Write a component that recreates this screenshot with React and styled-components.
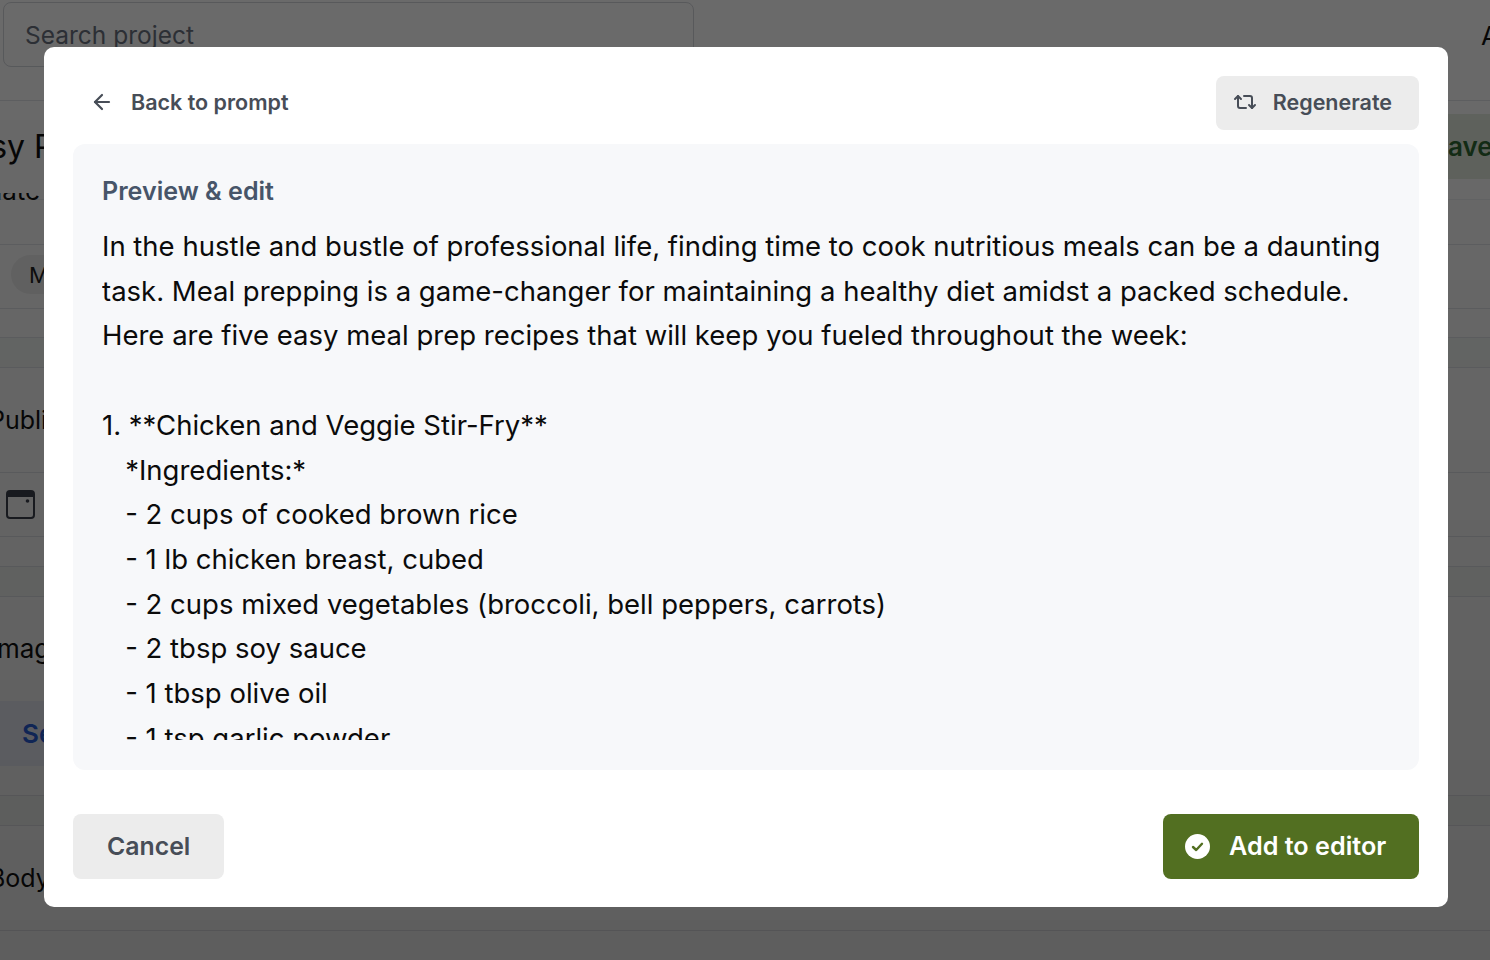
import styled, { createGlobalStyle } from 'styled-components';
import { ArrowLeft, Repeat2 } from 'lucide-react';

const GlobalStyle = createGlobalStyle`
  * {
    box-sizing: border-box;
  }
  html,
  body {
    margin: 0;
    height: 960px;
    overflow: hidden;
    background: #fff;
    font-family: Inter, 'Liberation Sans', sans-serif;
  }
`;

const Page = styled.div`
  width: 1490px;
  height: 960px;
  overflow: hidden;
`;

const Row = styled.div`
  height: ${(p) => p.$height}px;
  display: flex;
  align-items: ${(p) => p.$align || 'center'};
  justify-content: space-between;
  overflow: hidden;
  border-bottom: 1px solid #e3e5ea;
  background: ${(p) => (p.$tint ? '#f6f9f8' : '#fff')};
`;

const SearchBox = styled.div`
  width: 691px;
  height: 65px;
  margin: 2px 0 0 3px;
  padding: 0 21px;
  display: flex;
  align-items: center;
  border: 1px solid #d4d7dc;
  border-radius: 8px;
  font-size: 24.5px;
  color: #6b7280;
`;

const Avatar = styled.span`
  width: 30px;
  margin: 20px -21px 0 0;
  font-size: 26px;
  color: #111;
`;

const Clipped = styled.span`
  margin-left: ${(p) => p.$left}px;
  font-size: ${(p) => p.$size}px;
  color: #111;
  white-space: nowrap;
`;

const TitleRow = styled.div`
  height: 99px;
  display: flex;
  flex-direction: column;
  border-bottom: 1px solid #eef0f2;
`;

const TitleLine = styled.div`
  height: 92px;
  flex: none;
  display: flex;
  align-items: center;
  justify-content: space-between;
  padding-bottom: 1px;
  overflow: hidden;
`;

const SaveButton = styled.div`
  width: 120px;
  height: 65px;
  margin-right: -40px;
  display: flex;
  align-items: center;
  padding-left: 21px;
  background: #e6eee1;
  font-size: 26px;
  font-weight: 600;
  color: #2f6b34;
`;

const SubtitleStrip = styled.div`
  height: 9px;
  flex: none;
  overflow: hidden;
`;

const Subtitle = styled.div`
  margin: -18px 0 0 -49px;
  font-size: 26px;
  line-height: 32px;
  color: #111;
`;

const Chip = styled.div`
  width: 90px;
  height: 39px;
  margin: 0 0 4px 11px;
  padding-left: 18px;
  display: flex;
  align-items: center;
  border-radius: 20px;
  background: #f0f0f0;
  font-size: 22px;
  color: #222;
`;

const ImageCol = styled.div`
  display: flex;
  flex-direction: column;
  margin-top: 36px;
`;

const SelectButton = styled.div`
  width: 200px;
  height: 65px;
  margin: 37px 0 0 -12px;
  padding-left: 34px;
  display: flex;
  align-items: center;
  background: #eef2fb;
  font-size: 26px;
  font-weight: 600;
  color: #2b62e0;
`;

const CalendarSvg = styled.svg`
  margin-left: 6px;
`;

const Overlay = styled.div`
  position: fixed;
  inset: 0;
  background: linear-gradient(180deg, rgba(0, 0, 0, 0.585), rgba(0, 0, 0, 0.63));
`;

const Modal = styled.div`
  position: fixed;
  left: 44px;
  top: 47px;
  width: 1404px;
  height: 860px;
  padding: 29px 29px 28px;
  display: flex;
  flex-direction: column;
  background: #fff;
  border-radius: 10px;
`;

const ModalHeader = styled.div`
  height: 54px;
  flex: none;
  display: flex;
  align-items: center;
  justify-content: space-between;
  margin-bottom: 14px;
`;

const BackLink = styled.div`
  display: flex;
  align-items: center;
  gap: 17px;
  padding: 0 0 2px 17px;
  font-size: 21.5px;
  font-weight: 600;
  color: #474d57;
`;

const GreyButton = styled.div`
  height: ${(p) => p.$height}px;
  padding: 0 ${(p) => p.$right}px 2px ${(p) => p.$left}px;
  display: flex;
  align-items: center;
  gap: ${(p) => p.$gap || 0}px;
  background: #ececec;
  border-radius: 8px;
  font-size: ${(p) => p.$size}px;
  font-weight: 600;
  color: #474d57;
`;

const Panel = styled.div`
  height: 626px;
  flex: none;
  padding: 30px 29px;
  display: flex;
  flex-direction: column;
  background: #f7f8fa;
  border-radius: 12px;
`;

const PanelTitle = styled.div`
  height: 50px;
  flex: none;
  font-size: 25.1px;
  line-height: 35px;
  font-weight: 600;
  color: #475569;
`;

const PreviewText = styled.div`
  height: 516px;
  overflow: hidden;
  white-space: pre-wrap;
  font-size: 27.5px;
  line-height: 44.7px;
  color: #0b0b0b;
`;

const ModalFooter = styled.div`
  margin-top: 44px;
  display: flex;
  align-items: center;
  justify-content: space-between;
`;

const GreenButton = styled.div`
  width: 256px;
  height: 65px;
  padding-left: 22px;
  display: flex;
  align-items: center;
  gap: 19px;
  background: #526f21;
  border-radius: 8px;
  font-size: 25.2px;
  font-weight: 600;
  color: #fff;
`;

const GreenLabel = styled.span`
  margin-bottom: 2px;
`;

const previewCopy = `In the hustle and bustle of professional life, finding time to cook nutritious meals can be a daunting task. Meal prepping is a game-changer for maintaining a healthy diet amidst a packed schedule. Here are five easy meal prep recipes that will keep you fueled throughout the week:

1. **Chicken and Veggie Stir-Fry**
   *Ingredients:*
   - 2 cups of cooked brown rice
   - 1 lb chicken breast, cubed
   - 2 cups mixed vegetables (broccoli, bell peppers, carrots)
   - 2 tbsp soy sauce
   - 1 tbsp olive oil
   - 1 tsp garlic powder
   - Salt and pepper to taste`;

function CalendarIcon() {
  return (
    <CalendarSvg width="30" height="30" viewBox="0 0 30 30">
      <rect x="1" y="1" width="27" height="27" rx="3" fill="none" stroke="#3f4450" strokeWidth="2" />
      <path d="M1 7V4a3 3 0 0 1 3-3h21a3 3 0 0 1 3 3v3z" fill="#3f4450" />
      <circle cx="21.5" cy="11" r="1.8" fill="#3f4450" />
    </CalendarSvg>
  );
}

function CheckBadge() {
  return (
    <svg width="25" height="25" viewBox="0 0 25 25">
      <circle cx="12.5" cy="12.5" r="12.5" fill="#fff" />
      <path d="M8 13l3.2 3L17 9.8" fill="none" stroke="#526f21" strokeWidth="2.4" strokeLinecap="round" strokeLinejoin="round" />
    </svg>
  );
}

function BackgroundPage() {
  return (
    <Page>
      <Row $height={101} $align="flex-start">
        <SearchBox>Search project</SearchBox>
        <Avatar>A</Avatar>
      </Row>
      <TitleRow>
        <TitleLine>
          <Clipped $left={-47} $size={32}>Easy Prep</Clipped>
          <SaveButton>Save</SaveButton>
        </TitleLine>
        <SubtitleStrip>
          <Subtitle>Update</Subtitle>
        </SubtitleStrip>
      </TitleRow>
      <Row $height={45} />
      <Row $height={64}>
        <Chip>Meal</Chip>
      </Row>
      <Row $height={29} />
      <Row $height={30} $tint />
      <Row $height={105}>
        <Clipped $left={-11} $size={25}>Publish</Clipped>
      </Row>
      <Row $height={64}>
        <CalendarIcon />
      </Row>
      <Row $height={30} />
      <Row $height={30} $tint />
      <Row $height={199} $align="flex-start">
        <ImageCol>
          <Clipped $left={-10} $size={26}>Image</Clipped>
          <SelectButton>Select</SelectButton>
        </ImageCol>
      </Row>
      <Row $height={30} $tint />
      <Row $height={105}>
        <Clipped $left={-11} $size={25}>Body</Clipped>
      </Row>
    </Page>
  );
}

function App() {
  return (
    <>
      <GlobalStyle />
      <BackgroundPage />
      <Overlay />
      <Modal>
        <ModalHeader>
          <BackLink>
            <ArrowLeft size={24} strokeWidth={2.2} />
            Back to prompt
          </BackLink>
          <GreyButton $height={54} $left={17} $right={27} $gap={16} $size={21.5}>
            <Repeat2 size={24} strokeWidth={2} />
            Regenerate
          </GreyButton>
        </ModalHeader>
        <Panel>
          <PanelTitle>Preview &amp; edit</PanelTitle>
          <PreviewText>{previewCopy}</PreviewText>
        </Panel>
        <ModalFooter>
          <GreyButton $height={65} $left={34} $right={34} $size={24.8}>Cancel</GreyButton>
          <GreenButton>
            <CheckBadge />
            <GreenLabel>Add to editor</GreenLabel>
          </GreenButton>
        </ModalFooter>
      </Modal>
    </>
  );
}

export default App;
